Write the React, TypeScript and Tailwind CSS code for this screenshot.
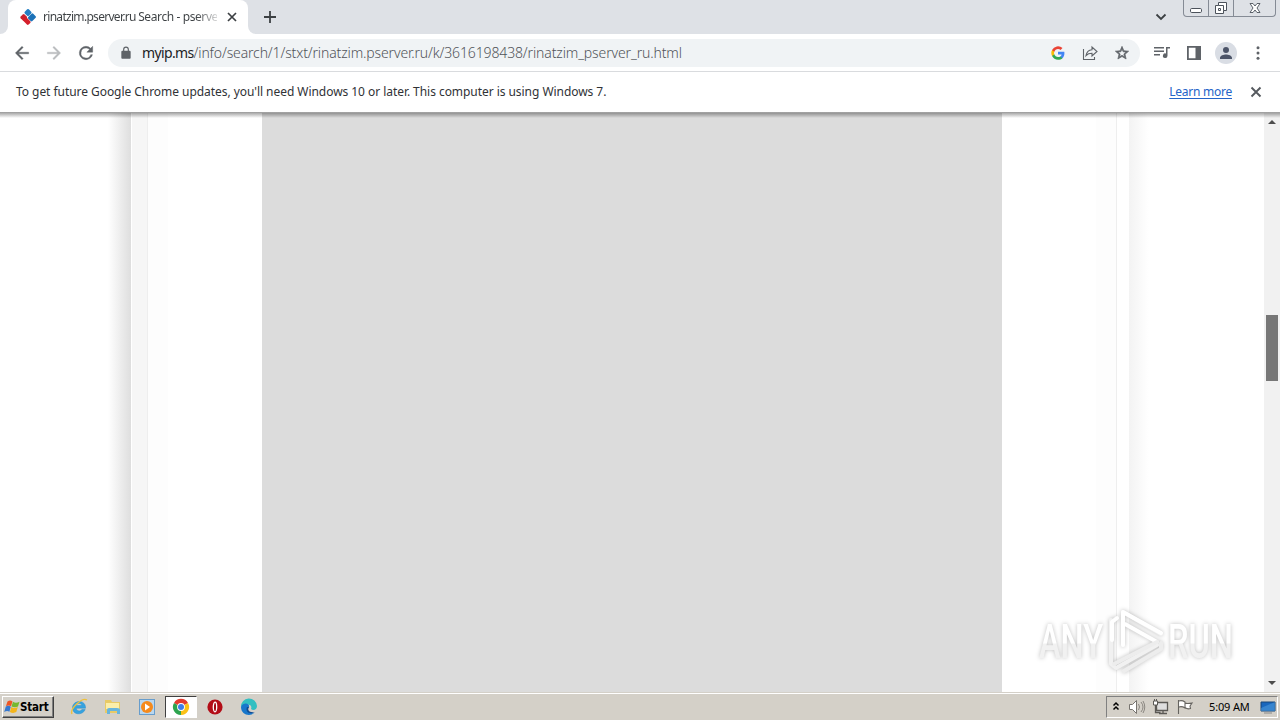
import React from "react";

type IconProps = { className?: string; children: React.ReactNode; box?: string };

function Glyph({ className = "size-5", box = "0 0 24 24", children }: IconProps) {
  return (
    <svg className={`block shrink-0 ${className}`} viewBox={box} fill="currentColor">
      {children}
    </svg>
  );
}

function TabStrip() {
  return (
    <div className="flex h-[34px] shrink-0 bg-[#dee1e6]">
      <div className="flex w-2 items-end bg-white">
        <div className="h-full w-full rounded-br-lg bg-[#dee1e6]" />
      </div>
      <div className="flex w-[240px] items-center rounded-t-lg bg-white pl-[11px]">
        <Glyph className="size-[18px]" box="0 0 18 18">
          <g transform="translate(9 9) rotate(45)">
            <rect x="-6" y="-6" width="5.700" height="5.700" rx="1.200" fill="#247fc4" />
            <rect x="0.200" y="-6" width="5.800" height="7" rx="1.200" fill="#1c72b8" />
            <rect x="-5.500" y="0.600" width="5.500" height="5.500" rx="1.200" fill="#c9222d" />
            <rect x="-1.500" y="1.400" width="7.300" height="4.700" rx="1.200" fill="#d51f2b" />
          </g>
        </Glyph>
        <div className="ml-[6px] w-[174px] whitespace-nowrap bg-gradient-to-r from-[#3c4043] from-88% to-[#3c4043]/20 bg-clip-text text-[12px] leading-4 tracking-[-0.700px] text-transparent">
          rinatzim.pserver.ru <span className="tracking-[-0.400px]">Search - pserver</span>
        </div>
        <Glyph className="ml-[9px] size-[12px] text-[#3c4043]" box="0 0 12 12">
          <path d="M2 2l8 8M10 2l-8 8" stroke="currentColor" strokeWidth="1.700" />
        </Glyph>
      </div>
      <div className="w-2 bg-white">
        <div className="h-full w-full rounded-bl-lg bg-[#dee1e6]" />
      </div>
      <Glyph className="ml-[7px] mt-[10px] size-[14px] text-[#3c4043]" box="0 0 14 14">
        <path d="M7 1v12M1 7h12" stroke="currentColor" strokeWidth="1.800" />
      </Glyph>
      <Glyph className="ml-auto mr-[16px] mt-[11px] size-[12px] text-[#3c4043]" box="0 0 12 12">
        <path d="M1.500 3.500L6 8l4.500-4.500" fill="none" stroke="currentColor" strokeWidth="1.800" />
      </Glyph>
      <div className="mr-[4px] flex h-[17px] w-[93px] rounded-b-[4px] border border-t-0 border-[#858b95] text-[#4c525b]">
        <div className="flex w-[25px] justify-center border-r border-[#858b95]">
          <Glyph className="h-4 w-4" box="0 0 16 16"><rect x="2.500" y="8.500" width="11" height="4" rx="1.200" fill="#fff" stroke="currentColor" /></Glyph>
        </div>
        <div className="flex w-[25px] justify-center border-r border-[#858b95]">
          <Glyph className="h-4 w-4" box="0 0 16 16">
            <path d="M5.500 2.500h8v8h-3v3h-8v-8h3z" fill="#fff" stroke="currentColor" />
            <path d="M5.500 5.500h5v5M5.500 8.500h2v2h-2z" fill="none" stroke="currentColor" />
          </Glyph>
        </div>
        <div className="flex flex-1 justify-center">
          <Glyph className="h-4 w-4" box="0 0 16 16">
            <path d="M3 3.500h3l2 2.500 2-2.500h3L10 8l3 4.500h-3L8 10l-2 2.500H3L6 8z" fill="#fff" stroke="currentColor" strokeWidth=".9" />
          </Glyph>
        </div>
      </div>
    </div>
  );
}

function Toolbar() {
  return (
    <div className="flex h-[38px] shrink-0 items-center border-b border-[#d9dbde] bg-white pl-3 text-[#5f6368]">
      <Glyph><path d="M20 11H7.830l5.590-5.590L12 4l-8 8 8 8 1.410-1.410L7.830 13H20z" stroke="currentColor" strokeWidth=".4" /></Glyph>
      <Glyph className="ml-3 size-5 text-[#babcbe]"><path d="M12 4l-1.410 1.410L16.170 11H4v2h12.170l-5.580 5.590L12 20l8-8z" stroke="currentColor" strokeWidth=".4" /></Glyph>
      <Glyph className="ml-3 size-5"><path d="M17.650 6.350A7.960 7.960 0 0 0 12 4a8 8 0 1 0 7.730 10h-2.080A6 6 0 1 1 12 6c1.660 0 3.140.69 4.220 1.780L13 11h7V4z" stroke="currentColor" strokeWidth=".5" /></Glyph>
      <div className="ml-3 flex h-7 w-[1032px] items-center rounded-full bg-[#f0f3f5] pl-[11px] pr-2">
        <Glyph className="h-[14px] w-[14px]"><path d="M18 8h-1V6A5 5 0 0 0 7 6v2H6c-1.100 0-2 .9-2 2v10c0 1.100.9 2 2 2h12c1.100 0 2-.9 2-2V10c0-1.100-.9-2-2-2zM9 6a3 3 0 0 1 6 0v2H9z" /></Glyph>
        <div className="ml-[9px] whitespace-nowrap text-[14px] font-light leading-5 tracking-[-0.135px] text-[#505459]">
          <span className="font-normal tracking-[-0.640px] text-[#202124]">myip.ms</span>/info/search/1/stxt/rinatzim.pserver.ru/k/3616198438/rinatzim_pserver_ru.html
        </div>
        <Glyph className="ml-auto size-[14px]">
          <path fill="#4285f4" d="M23 12.300c0-.8-.1-1.600-.2-2.300H12v4.500h6.200a5.300 5.300 0 0 1-2.300 3.400v3h3.700c2.200-2 3.400-5 3.400-8.600z" />
          <path fill="#34a853" d="M12 23.500c3.100 0 5.700-1 7.600-2.700l-3.700-3c-1 .7-2.300 1.200-3.900 1.200-3 0-5.500-2-6.400-4.700H1.800v3A11.500 11.500 0 0 0 12 23.500z" />
          <path fill="#fbbc05" d="M5.600 14.200a7 7 0 0 1 0-4.400v-3H1.800a11.500 11.500 0 0 0 0 10.400z" />
          <path fill="#ea4335" d="M12 5.100c1.700 0 3.200.6 4.400 1.700l3.300-3.300A11.500 11.500 0 0 0 1.800 6.800l3.800 3C6.500 7.100 9 5.100 12 5.100z" />
        </Glyph>
        <Glyph className="ml-[17px] size-4" box="0 0 16 16">
          <path d="M1.500 4v10.500h11V12M4 10.500c.7-4 2.500-5.500 6-5.800V2l5 4.500L10 11V8.200c-2.500 0-4.500.7-6 2.300z" fill="none" stroke="currentColor" strokeWidth="1.100" />
        </Glyph>
        <Glyph className="ml-4 mr-[2px] size-4"><path d="M22 9.240l-7.190-.62L12 2 9.190 8.630 2 9.240l5.460 4.730L5.820 21 12 17.270 18.180 21l-1.630-7.030zM12 15.400l-3.760 2.270 1-4.280-3.320-2.880 4.380-.38L12 6.100l1.710 4.040 4.380.38-3.320 2.880 1 4.280z" stroke="currentColor" /></Glyph>
      </div>
      <Glyph className="ml-[13px] size-[18px]" box="0 0 18 18"><path d="M1 3h10v1.500H1zM1 6.500h10V8H1zM1 10h6v1.500H1zM13 3h4v1.500h-2.500v7.200a2.300 2.300 0 1 1-1.500-2.100z" /></Glyph>
      <Glyph className="ml-[15px] size-4" box="0 0 16 16"><path d="M1 1h14v14H1zm1.800 1.800v10.400h6.700V2.800z" fillRule="evenodd" /></Glyph>
      <div className="ml-[13px] flex size-[22px] items-center justify-center rounded-full bg-[#d9dde4] text-[#4c5468]">
        <Glyph className="size-[18px]"><path d="M12 12a4 4 0 1 0 0-8 4 4 0 0 0 0 8zm0 2c-3 0-8 1.500-8 4.500V20h16v-1.500c0-3-5-4.500-8-4.500z" /></Glyph>
      </div>
      <Glyph className="ml-[12px] size-[18px]"><circle cx="12" cy="5" r="2" /><circle cx="12" cy="12" r="2" /><circle cx="12" cy="19" r="2" /></Glyph>
    </div>
  );
}

function UpdateNotice() {
  return (
    <div className="flex h-[41px] shrink-0 items-center bg-white pb-px pl-4 pr-[18px] text-[12px] leading-4 text-[#303236]">
      <span className="tracking-[-0.050px]">To get future Google Chrome updates, you'll need Windows 10 or later. This computer is using Windows 7.</span>
      <a className="ml-auto tracking-[-0.250px] text-[#2464c8] underline underline-offset-2">Learn more</a>
      <Glyph className="ml-[18px] size-3 text-[#55595e]" box="0 0 12 12"><path d="M1.500 1.500l9 9M10.500 1.500l-9 9" stroke="currentColor" strokeWidth="1.900" /></Glyph>
    </div>
  );
}

function Watermark() {
  return (
    <svg className="absolute left-[1028px] top-[491px] h-[76px] w-[224px] drop-shadow-[0_0_2px_rgba(0,0,0,0.25)]" viewBox="0 0 224 76">
      <defs>
        <linearGradient id="mark" x1="0" y1="0" x2="0" y2="1">
          <stop offset="0.520" stopColor="#fff" />
          <stop offset="0.550" stopColor="#f1f1f1" />
        </linearGradient>
      </defs>
      <g fill="url(#mark)" fontFamily="Roboto" fontSize="48" fontWeight="500">
        <text x="11" y="54" textLength="64" lengthAdjust="spacingAndGlyphs">ANY</text>
        <text x="140" y="54" textLength="65" lengthAdjust="spacingAndGlyphs">RUN</text>
      </g>
      <g fill="none" strokeWidth="4" strokeLinejoin="round" strokeLinecap="round">
        <path d="M83 16v44l5 4 41-23M95 8v33M95 8l38 22" stroke="#f1f1f1" />
        <path d="M95 41V8l38 21M84 36V18l5-4M97 20l32 18" stroke="#fff" />
        <path d="M86 60l43-22M96 67l37-22v-6" stroke="#ededed" />
      </g>
    </svg>
  );
}

function PageView() {
  return (
    <div className="relative flex h-[579px] shrink-0 bg-white">
      <div className="w-[108px]" />
      <div className="w-[23px] bg-gradient-to-r from-white to-[#dedede]" />
      <div className="w-4 border-l border-white bg-[#f6f6f6]" />
      <div className="flex w-[970px] border-x border-[#eee] bg-white">
        <div className="w-[20px] bg-[#fdfdfd]" />
        <div className="ml-[94px] w-[740px] bg-[#dcdcdc]" />
        <div className="ml-auto w-[20px] bg-[#fdfdfd]" />
      </div>
      <div className="w-3 bg-white" />
      <div className="w-[20px] bg-gradient-to-r from-[#f3f3f3] to-white" />
      <div className="ml-auto flex w-4 flex-col items-center justify-between bg-[#f1f1f1] pb-[6px] pt-[6px] text-[#4d4d4d]">
        <Glyph className="h-[5px] w-[8px]" box="0 0 8 5"><path d="M0 5l4-4 4 4z" /></Glyph>
        <div className="mb-[110px] h-[66px] w-3 bg-[#777]" />
        <Glyph className="h-[5px] w-[8px]" box="0 0 8 5"><path d="M0 0l4 4 4-4z" /></Glyph>
      </div>
      <div className="absolute inset-x-0 -top-px h-[6px] bg-gradient-to-b from-black/40 to-transparent" />
      <Watermark />
    </div>
  );
}

function Taskbar() {
  return (
    <div className="flex h-7 shrink-0 items-center border-t border-[#d4d0c8] bg-[#d4d0c8] px-[2px] text-black shadow-[inset_0_1px_0_#fff]">
      <div className="flex h-[22px] w-[52px] items-center border border-b-[#404040] border-l-white border-r-[#404040] border-t-white pl-[1px] shadow-[inset_-1px_-1px_0_#808080]">
        <Glyph className="size-4" box="0 0 16 16">
          <path d="M3.500 2.500c2-1.400 3.500-1.200 5-.1L7 7.200c-1.500-1-3-1-5-.1z" fill="#ee5624" />
          <path d="M9 2.700c2 1.300 4 1.200 6.500 0L14 7.500c-2.500 1.100-4.500.9-6.500-.1z" fill="#75b82e" />
          <path d="M1.800 7.600c2-1.100 3.500-.9 5 .1L5.400 12.800c-1.500-1.100-3.200-1-5.200.1z" fill="#3678cf" />
          <path d="M7.300 8c2 1.200 4 1.200 6.500 0l-1.500 5.100c-2.200 1.200-4.500 1-6.400-.1z" fill="#f4b51b" />
        </Glyph>
        <span className="font-['DejaVu_Sans_Condensed','DejaVu_Sans',sans-serif] text-[11.5px] font-bold leading-4 tracking-[-0.200px]">Start</span>
      </div>
      <Glyph className="ml-[16px] size-[18px]" box="0 0 18 18">
        <path d="M15.500 10.200H6.200c.3 3 4.500 3.600 5.600 1.400h3.400C12.500 18 2 17 2.500 9.500 3 1.500 16 1.200 15.500 10.200zM6.200 7.500h5.600c-.5-2.600-5-2.600-5.600 0z" fill="#36a3df" stroke="#2a8dcc" strokeWidth=".5" />
        <path d="M2 16C-.5 11 12-1 17 2" fill="none" stroke="#efc13c" strokeWidth="1.400" />
      </Glyph>
      <Glyph className="ml-[16px] size-[18px]" box="0 0 18 18">
        <path d="M1 2h6l1 2h8v11H1z" fill="#e8ca66" /><path d="M2 5h13v6H2z" fill="#fbeeaa" />
        <path d="M3 16v-4q0-2 2-2h8q3 0 3 2v4h-3v-3H6v3z" fill="#68b5dd" />
      </Glyph>
      <Glyph className="ml-[16px] size-[18px]" box="0 0 18 18">
        <rect x="1.500" y="1.500" width="15" height="15" fill="#b9d7ef" stroke="#679dcc" /><circle cx="9" cy="9" r="6" fill="#f58a1c" /><path d="M7 5.500l5 3.500-5 3.500z" fill="#fff" />
      </Glyph>
      <div className="ml-[9px] flex h-[22px] w-8 items-center justify-center border border-b-white border-l-[#404040] border-r-white border-t-[#404040] bg-white">
        <Glyph className="size-[18px]" box="0 0 18 18">
          <path d="M9 9L2 5a8 8 0 0 1 14 0z" fill="#e33b2e" /><path d="M9 9l7-4a8 8 0 0 1-7 12z" fill="#fbc116" /><path d="M9 9v8A8 8 0 0 1 2 5z" fill="#2da44f" /><circle cx="9" cy="9" r="3.900" fill="#fff" /><circle cx="9" cy="9" r="3" fill="#3f7de8" />
        </Glyph>
      </div>
      <Glyph className="ml-[9px] size-[18px]" box="0 0 18 18"><circle cx="9" cy="9" r="7.600" fill="#b30d17" /><ellipse cx="9" cy="9" rx="1.700" ry="4.800" fill="#a20912" stroke="#fff" strokeWidth="1.300" /></Glyph>
      <Glyph className="ml-[16px] size-[18px]" box="0 0 18 18">
        <path d="M1 9a8 8 0 0 1 16-1c0 4-4 5-6 3 2-5-5-6-10-2z" fill="#32bfc1" /><path d="M1 9c2-5 9-4 8 0-3 3 0 7 5 6-4 4-13 2-13-6z" fill="#1877cb" /><path d="M7 9c-2 5 3 8 8 5-6 1-8-2-6-5z" fill="#104a91" />
      </Glyph>
      <div className="ml-auto flex h-[22px] w-[172px] items-center border border-b-white border-l-[#808080] border-r-white border-t-[#808080] pl-[5px]">
        <Glyph className="h-3 w-2" box="0 0 8 12"><path d="M1.500 4.500L4 2l2.500 2.500M1.500 8.500L4 6l2.500 2.500" fill="none" stroke="currentColor" strokeWidth="1.500" /></Glyph>
        <Glyph className="ml-[8px] size-[18px] text-[#77746f]" box="0 0 18 18"><path d="M1.500 6.500h3l4-4v13l-4-4h-3z" fill="#fff" stroke="currentColor" /><path d="M10.500 6q2 3 0 6M13 4q4 5 0 10M15 3q3.500 6 0 12" fill="none" stroke="currentColor" strokeWidth=".8" /></Glyph>
        <Glyph className="ml-[6px] size-[18px] text-[#5b5955]" box="0 0 18 18"><path d="M4.500 4.500h11v8h-11zM7 15.500h8M11 12.500v3M3.500 7v7.500h5" fill="#dedede" stroke="currentColor" strokeWidth="1.300" /><path d="M1.500 3h4v4h-4zM2.500 1v2M4.500 1v2" fill="#fff" stroke="currentColor" /></Glyph>
        <Glyph className="ml-[6px] size-[18px] text-[#65635f]" box="0 0 18 18"><path d="M2.500 2v14M3 3q3-1 6 1v6q-3-2-6-1M9 5q2 1 7 0l-2 3 .5 2.500q-3 1-5.500-1" fill="#fff" stroke="currentColor" strokeWidth="1.100" /></Glyph>
        <span className="ml-[15px] w-[44px] whitespace-nowrap text-[11px] leading-4 tracking-[-0.150px]">5:09 AM</span>
        <Glyph className="ml-[7px] size-[16px]" box="0 0 16 16"><path d="M1 3h14v9H1z" fill="#1a67bd" stroke="#184778" /><path d="M1 9l14-6v9H1z" fill="#56a3e2" opacity=".5" /><path d="M4 14h8" stroke="#888" /></Glyph>
      </div>
    </div>
  );
}

export default function App() {
  return (
    <div className="flex h-[720px] w-[1280px] flex-col overflow-hidden bg-white font-['Noto_Sans',sans-serif]">
      <TabStrip />
      <Toolbar />
      <UpdateNotice />
      <PageView />
      <Taskbar />
    </div>
  );
}
